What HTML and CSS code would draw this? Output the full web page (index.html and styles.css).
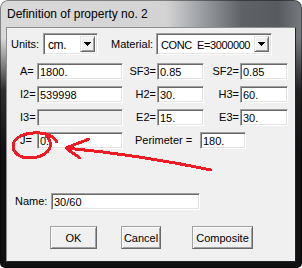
FILE: index.html
```html
<!DOCTYPE html>
<html lang="en">
<head>
  <meta charset="UTF-8">
  <title>Definition of property no. 2</title>
  <link rel="stylesheet" href="styles.css">
</head>
<body>
  <div class="window">
    <div class="titlebar">Definition of property no. 2</div>

    <div class="client">
      <div class="row row-top">
        <span class="lbl-units">Units:</span>
        <div class="combo combo-units">
          <span class="combo-text">cm.</span>
          <span class="combo-btn"><svg width="7" height="4" viewBox="0 0 7 4"><polygon points="0,0 7,0 3.5,4" fill="#000"/></svg></span>
        </div>
        <span class="lbl-material">Material:</span>
        <div class="combo combo-material">
          <span class="combo-text">CONC&nbsp; E=3000000</span>
          <span class="combo-btn"><svg width="7" height="4" viewBox="0 0 7 4"><polygon points="0,0 7,0 3.5,4" fill="#000"/></svg></span>
        </div>
      </div>

      <div class="row row-first">
        <span class="lbl c1">A=</span><input class="edit wide" value="1800.">
        <span class="lbl c3">SF3=</span><input class="edit small" value="0.85">
        <span class="lbl c5">SF2=</span><input class="edit small2" value="0.85">
      </div>
      <div class="row">
        <span class="lbl c1">I2=</span><input class="edit wide" value="539998">
        <span class="lbl c3">H2=</span><input class="edit small" value="30.">
        <span class="lbl c5">H3=</span><input class="edit small2" value="60.">
      </div>
      <div class="row">
        <span class="lbl c1">I3=</span><input class="edit wide off" value="" disabled>
        <span class="lbl c3">E2=</span><input class="edit small" value="15.">
        <span class="lbl c5">E3=</span><input class="edit small2" value="30.">
      </div>
      <div class="row">
        <span class="lbl c1">J=</span><input class="edit wide" value="0.">
        <span class="lbl perim">Perimeter =</span><input class="edit perim-box" value="180.">
      </div>

      <div class="row row-name">
        <span class="lbl name-lbl">Name:</span><input class="edit name-box" value="30/60">
      </div>

      <div class="buttons">
        <button class="btn btn-ok">OK</button>
        <button class="btn btn-cancel">Cancel</button>
        <button class="btn btn-composite">Composite</button>
      </div>
    </div>

    <!-- red hand drawn markup on top of the dialog -->
    <svg class="markup" width="302" height="268" viewBox="0 0 302 268">
      <g fill="none" stroke="#ed1c24" stroke-width="3" stroke-linecap="round" stroke-linejoin="round">
        <path d="M57 142 C53 135 44 132 33 133 C21 134 13 139 13 146 C13 153 20 158 29 158 C39 158 48 154 50 147 C51 142 49 138 46 136"/>
        <path d="M66 148 Q140 155 211 170"/>
        <path d="M66 148 L89 139"/>
        <path d="M67 149 L80 158"/>
      </g>
    </svg>
  </div>
</body>
</html>
```

FILE: styles.css
```css
* {
  box-sizing: border-box;
}

body {
  margin: 0;
  background: #fff;
  font-family: 'Liberation Sans', Arial, sans-serif;
  font-size: 11px;
  color: #000;
}

.window {
  position: relative;
  width: 302px;
  height: 268px;
  display: flex;
  flex-direction: column;
  border-radius: 8px 8px 5px 5px;
  background:
    linear-gradient(to bottom, rgba(22,22,24,0) 0, rgba(22,22,24,0) 38px, rgba(22,22,24,0.88) 90px, #111113 150px),
    linear-gradient(to right, #dadada 0, #d3d3d3 55%, #9a9ea2 67%, #5f6368 80%, #575b60 92%, #767a7e 100%);
  box-shadow: inset 0 0 0 1px rgba(0,0,0,0.4);
}

.titlebar {
  height: 27px;
  line-height: 28px;
  padding-left: 7px;
  font-size: 12px;
  color: #000;
}

.client {
  flex: 1;
  margin: 0 6px 6px 6px;
  background: #f0f0f0;
  border: 1px solid #222;
  border-top-color: #8e8e8e;
  border-left-color: #8e8e8e;
  display: flex;
  flex-direction: column;
}

.row {
  display: flex;
  align-items: center;
  height: 17px;
  margin-top: 6px;
}

.row-top {
  height: 22px;
  margin-top: 5px;
  padding-left: 4px;
}

.row-first {
  margin-top: 8px;
}

.row-name {
  margin-top: 44px;
}

.lbl-units {
  width: 32px;
}

.lbl-material {
  width: 45px;
  margin-left: 13px;
}

.combo {
  display: flex;
  height: 22px;
  background: #fff;
  border: 1px solid;
  border-color: #a0a0a0 #fff #fff #a0a0a0;
  box-shadow: inset 1px 1px 0 #696969, inset -1px -1px 0 #e3e3e3;
  padding: 2px;
}

.combo-units {
  width: 55px;
}

.combo-material {
  width: 116px;
}

.combo-text {
  flex: 1;
  line-height: 18px;
  padding-left: 2px;
  font-size: 11px;
  letter-spacing: -0.4px;
  white-space: nowrap;
  overflow: hidden;
}

.combo-units .combo-text {
  font-size: 12px;
}

.combo-btn {
  width: 15px;
  background: #f0f0f0;
  border: 1px solid;
  border-color: #e3e3e3 #696969 #696969 #e3e3e3;
  box-shadow: inset 1px 1px 0 #fff, inset -1px -1px 0 #a0a0a0;
  display: flex;
  align-items: center;
  justify-content: center;
}

.combo-btn svg {
  shape-rendering: crispEdges;
}

.lbl {
  line-height: 17px;
  white-space: nowrap;
}

.c1 {
  width: 30px;
  padding-left: 13px;
}

.c3 {
  width: 34px;
  text-align: right;
  padding-right: 1px;
}

.c5 {
  width: 36px;
  text-align: right;
  padding-right: 1px;
}

.edit {
  height: 17px;
  padding: 0 0 0 2px;
  margin: 0;
  font-family: 'Liberation Sans', Arial, sans-serif;
  font-size: 11px;
  color: #000;
  background: #fff;
  border: 1px solid;
  border-color: #a0a0a0 #fff #fff #a0a0a0;
  box-shadow: inset 1px 1px 0 #696969, inset -1px -1px 0 #e3e3e3;
  outline: none;
}

.edit.off {
  background: #f0f0f0;
}

.wide {
  width: 86px;
}

.small {
  width: 47px;
}

.small2 {
  width: 48px;
}

.perim {
  width: 65px;
  margin-left: 12px;
}

.perim-box {
  width: 46px;
}

.name-lbl {
  width: 36px;
  padding-left: 8px;
  box-sizing: content-box;
}

.name-box {
  width: 149px;
}

.buttons {
  display: flex;
  margin-top: 16px;
  padding-left: 43px;
}

.btn {
  height: 23px;
  padding: 0;
  font-family: 'Liberation Sans', Arial, sans-serif;
  font-size: 11px;
  color: #000;
  background: #f0f0f0;
  border: 1px solid;
  border-color: #a0a0a0 #696969 #696969 #a0a0a0;
  box-shadow: inset 1px 1px 0 #fff, inset -1px -1px 0 #a0a0a0;
}

.btn-ok {
  width: 47px;
}

.btn-cancel {
  width: 40px;
  margin-left: 24px;
}

.btn-composite {
  width: 61px;
  margin-left: 31px;
}

.markup {
  position: absolute;
  top: 0;
  left: 0;
  shape-rendering: crispEdges;
}
```
